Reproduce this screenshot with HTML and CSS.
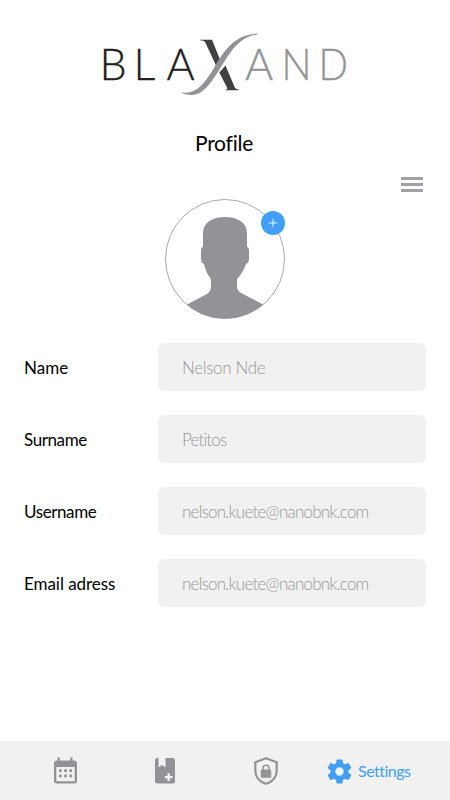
FILE: index.html
```html
<!DOCTYPE html>
<html lang="en">
<head>
<meta charset="utf-8">
<title>Profile</title>
<link rel="stylesheet" href="styles.css">
</head>
<body>
<div class="app">
  <header class="brand">
    <svg class="logo" width="270" height="68" viewBox="100 30 270 68" role="img" aria-label="Blaxand">
      <text class="logo-dark" x="99.500" y="80">B</text>
      <text class="logo-dark" x="133.500" y="80">L</text>
      <text class="logo-dark" x="166.500" y="80">A</text>
      <text class="logo-light" x="245" y="80">A</text>
      <text class="logo-light" x="281.500" y="80" textLength="30" lengthAdjust="spacingAndGlyphs">N</text>
      <text class="logo-light" x="318.500" y="80" textLength="29.500" lengthAdjust="spacingAndGlyphs">D</text>
      <path fill="#414042" d="M200 39.700H212L221 62L216.500 66.500L205.300 42.500Q204 40.300 200 40.200Z"/>
      <path fill="#414042" d="M225.500 65.500L234.800 87.500Q235.800 89.500 239 89.700V90.300H225.500V89.700Q228 89.500 227 87.500L219.300 72.500Z"/>
      <path fill="#929397" d="M180.700 92.300C196 95 204 83.500 211.500 72C220 58 231 34 257.500 33.600V34.600C239 36 229 54 219.500 69.500C209 87 201 95 192 95Q185 95 180.700 92.300Z"/>
    </svg>
  </header>
  <h1 class="title">Profile</h1>
  <button class="menu" aria-label="Menu"><span></span><span></span><span></span></button>
  <div class="avatar">
    <svg width="120" height="120" viewBox="0 0 120 120">
      <defs><clipPath id="round"><circle cx="60" cy="60" r="59.500"/></clipPath></defs>
      <path clip-path="url(#round)" fill="#929397" d="M60 18C47 18 38 24 38 34V48Q36 48 36 52V60Q36 64 39 65Q41 74 46 80V88Q46 93 40 96L21 106V120H99V106L78 95Q72 92 72 88V80Q78 74 81 65Q84 64 84 60V52Q84 48 82 48V34C82 24 73 18 60 18Z"/>
      <circle cx="60" cy="60" r="59.500" fill="none" stroke="#929397" stroke-width=".8"/>
    </svg>
    <button class="add" aria-label="Add photo"><svg width="10" height="10" viewBox="0 0 10 10"><path d="M5 .8V9.200M.8 5H9.200" stroke="#fff" stroke-width=".9"/></svg></button>
  </div>
  <main class="form">
    <div class="row"><span class="label l-name">Name</span><div class="field f-name">Nelson Nde</div></div>
    <div class="row"><span class="label l-sur">Surname</span><div class="field f-sur">Petitos</div></div>
    <div class="row"><span class="label l-user">Username</span><div class="field">nelson.kuete@nanobnk.com</div></div>
    <div class="row"><span class="label l-mail">Email adress</span><div class="field">nelson.kuete@nanobnk.com</div></div>
  </main>
  <nav class="tabs">
    <svg width="24" height="28" viewBox="0 0 24 28"><path fill="#929397" fill-rule="evenodd" d="M4.500 .500H6.800V3.500H17.200V.500H19.500V3.500H21Q24 3.500 24 6.500V24Q24 26.500 21.500 26.500H3.500Q1 26.500 1 24V6.500Q1 3.500 4 3.500H4.500ZM3.300 10V24.200H21.700V10ZM6 12.200H8.700V14.900H6ZM11.200 12.200H13.900V14.900H11.200ZM16.300 12.200H19V14.900H16.300ZM6 17.500H8.700V20.200H6ZM11.200 17.500H13.900V20.200H11.200ZM16.300 17.500H19V20.200H16.300Z"/></svg>
    <svg class="book" width="20" height="26" viewBox="0 0 20 26"><path fill="#929397" d="M2.500 0H3.500V9.500L7 7L10.500 9.500V0H17.500Q20 0 20 2.500V23Q20 25.500 17.500 25.500H2.500Q0 25.500 0 23V2.500Q0 0 2.500 0Z"/><path d="M13.700 15.200V23M9.800 19.100H17.600" stroke="#f1f1f1" stroke-width="2.400"/></svg>
    <svg class="shield" width="24" height="30" viewBox="0 0 24 30"><path fill="none" stroke="#929397" stroke-width="2.200" d="M12 2.200L22.700 6.300V14.500C22.700 21 18.500 25.800 12 27.800C5.500 25.800 1.300 21 1.300 14.500V6.300Z"/><rect x="6.800" y="13.500" width="10.400" height="8.300" rx="1" fill="#929397"/><path d="M9 14V12Q9 9.300 12 9.300Q15 9.300 15 12V14" fill="none" stroke="#929397" stroke-width="1.500"/></svg>
    <a class="settings"><svg width="29" height="29" viewBox="0 0 24 24"><path fill="#429ff5" d="M19.430 12.980c.04-.32.07-.64.07-.98s-.03-.66-.07-.98l2.110-1.650c.19-.15.240-.42.120-.64l-2-3.460c-.12-.22-.39-.3-.61-.22l-2.490 1c-.52-.4-1.080-.73-1.690-.98l-.38-2.650C14.460 2.180 14.250 2 14 2h-4c-.25 0-.46.180-.49.420l-.38 2.650c-.61.250-1.170.590-1.690.980l-2.490-1c-.23-.09-.49 0-.61.220l-2 3.460c-.13.220-.07.490.120.640l2.110 1.650c-.04.320-.07.650-.07.980s.03.660.07.980l-2.110 1.650c-.19.150-.24.420-.12.640l2 3.460c.12.220.39.300.61.220l2.490-1c.52.400 1.080.730 1.690.980l.38 2.650c.03.240.24.420.49.420h4c.25 0 .46-.18.490-.42l.38-2.650c.61-.25 1.170-.59 1.690-.98l2.490 1c.23.090.49 0 .61-.22l2-3.460c.12-.22.070-.49-.12-.64zM12 15.500A3.500 3.500 0 1 1 12 8.500A3.500 3.500 0 0 1 12 15.500Z"/></svg><span>Settings</span></a>
  </nav>
</div>
</body>
</html>
```
FILE: styles.css
```css
* { box-sizing: border-box; }
body { margin: 0; background: #fff; font-family: Lato, "Liberation Sans", sans-serif; font-variant-ligatures: none; color: #000; }
button { border: 0; padding: 0; background: none; }
.app { width: 450px; height: 800px; display: flex; flex-direction: column; overflow: hidden; }
.brand { padding: 30px 0 0 100px; height: 98px; }
.logo { display: block; overflow: visible; }
.logo text { font-size: 43px; font-weight: 300; stroke-width: .3px; }
.logo-dark { fill: #231f20; stroke: #231f20; }
.logo-light { fill: #929397; stroke: #929397; }
.title { margin: 30px 0 0; height: 30px; line-height: 30px; padding-left: 195px; font-size: 21px; font-weight: 400; letter-spacing: -.25px; white-space: nowrap; }
.menu { align-self: flex-end; margin: 19px 27px 0 0; width: 22px; height: 15px; display: flex; flex-direction: column; justify-content: space-between; }
.menu span { height: 3px; width: 22px; background: #a0a1a5; }
.avatar { position: relative; width: 120px; height: 120px; margin: 7px 0 0 165px; }
.avatar > svg { display: block; }
.add { position: absolute; top: 12px; right: 0; width: 24px; height: 24px; border-radius: 50%; background: #429ff5; display: flex; align-items: center; justify-content: center; }
.form { margin: 24px 24px 0; display: grid; gap: 24px; }
.row { display: grid; grid-template-columns: 134px 268px; height: 48px; align-items: center; }
.label { font-size: 17px; font-weight: 400; white-space: nowrap; }
.l-sur, .l-user { letter-spacing: -.4px; }
.l-mail { letter-spacing: -.05px; }
.field { height: 48px; line-height: 48px; padding: 1px 0 0 24px; background: #f1f1f1; border-radius: 6px; font-size: 17px; font-weight: 300; color: #97989b; letter-spacing: -.78px; white-space: nowrap; }
.f-name { letter-spacing: -.35px; }
.f-sur { letter-spacing: -.85px; }
.tabs { margin-top: auto; height: 59px; background: #f1f1f1; display: flex; align-items: center; padding: 1px 0 0 53px; }
.tabs svg { flex: none; }
.book { margin-left: 78px; }
.shield { margin-left: 79px; }
.settings { display: flex; align-items: center; margin-left: 47px; gap: 4px; font-size: 16px; letter-spacing: -.5px; color: #429ff5; }
.settings span { margin-top: -2px; }
```
